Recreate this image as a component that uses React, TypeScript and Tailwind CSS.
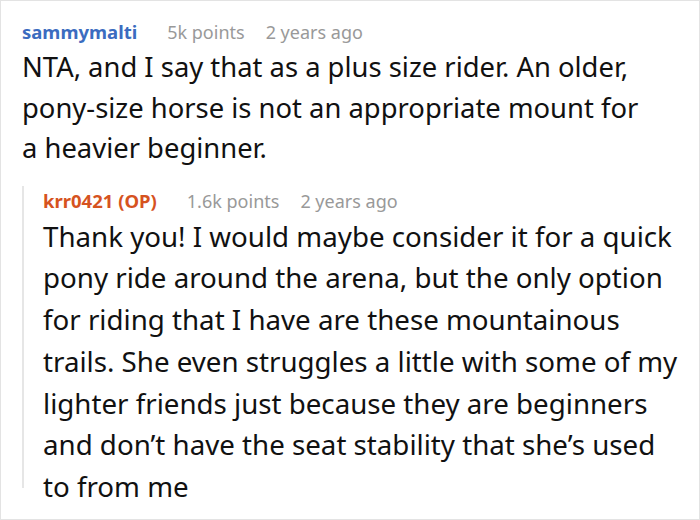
export default function App() {
  return (
    <div className="w-[700px] h-[520px] bg-white border border-[#e3e3e3] overflow-hidden font-['Noto_Sans',sans-serif] text-[#111]">
      <div className="pl-[21px] pr-[40px] pt-[16px]">
        <div className="flex items-baseline text-[18px] leading-[30px]">
          <span className="font-bold text-[18.5px] text-[#3b6cc0]">sammymalti</span>
          <span className="ml-[30px] text-[#999]">5k points</span>
          <span className="ml-[21px] text-[#999]">2 years ago</span>
        </div>
        <p className="text-[27.4px] leading-[40.5px]">
          NTA, and I say that as a plus size rider. An older, pony-size horse is not an appropriate mount for a heavier beginner.
        </p>
      </div>
      <div className="ml-[21px] mt-[17px] border-l-2 border-[#e6e6e6] pl-[19px] pr-3 h-[302px]">
        <div className="flex items-baseline text-[18px] leading-[30px]">
          <span className="font-bold text-[18.5px] text-[#d6531f]">krr0421 (OP)</span>
          <span className="ml-[30px] text-[#999]">1.6k points</span>
          <span className="ml-[21px] text-[#999]">2 years ago</span>
        </div>
        <p className="text-[27.7px] leading-[41.8px]">
          Thank you! I would maybe consider it for a quick pony ride around the arena, but the only option for riding that I have are these mountainous trails. She even struggles a little with some of my lighter friends just because they are beginners and don’t have the seat stability that she’s used to from me
        </p>
      </div>
    </div>
  );
}
